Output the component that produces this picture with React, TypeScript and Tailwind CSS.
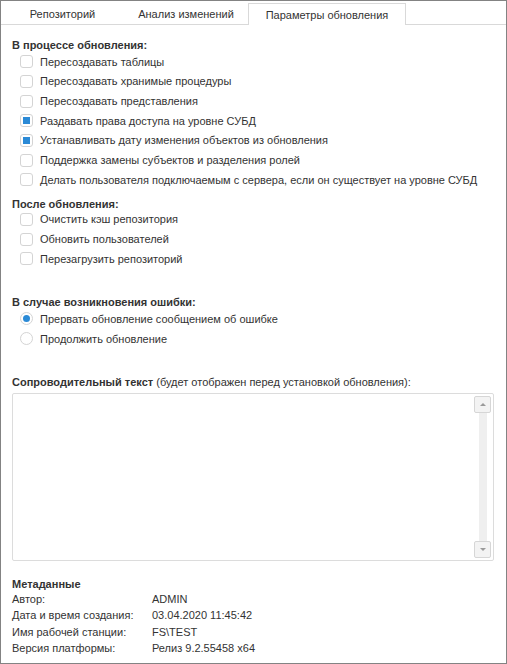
import React from "react";

type Opt = { label: string; checked?: boolean };

const during: Opt[] = [
  { label: "Пересоздавать таблицы" },
  { label: "Пересоздавать хранимые процедуры" },
  { label: "Пересоздавать представления" },
  { label: "Раздавать права доступа на уровне СУБД", checked: true },
  { label: "Устанавливать дату изменения объектов из обновления", checked: true },
  { label: "Поддержка замены субъектов и разделения ролей" },
  { label: "Делать пользователя подключаемым с сервера, если он существует на уровне СУБД" },
];

const after: Opt[] = [
  { label: "Очистить кэш репозитория" },
  { label: "Обновить пользователей" },
  { label: "Перезагрузить репозиторий" },
];

const meta = [
  ["Автор:", "ADMIN"],
  ["Дата и время создания:", "03.04.2020 11:45:42"],
  ["Имя рабочей станции:", "FS\\TEST"],
  ["Версия платформы:", "Релиз 9.2.55458 x64"],
];

function Check({ label, checked }: Opt) {
  return (
    <div className="flex h-[19.67px] items-center whitespace-nowrap">
      <span className="ml-[8px] mr-[7px] flex h-[13px] w-[13px] shrink-0 items-center justify-center rounded-[3px] border border-[#d4d4d4] bg-white">
        {checked && <span className="h-[7px] w-[7px] bg-[#2b8ad6]" />}
      </span>
      <span>{label}</span>
    </div>
  );
}

function Radio({ label, checked }: Opt) {
  return (
    <div className="flex h-[20px] items-center whitespace-nowrap">
      <span className="ml-[8px] mr-[7px] flex h-[13px] w-[13px] shrink-0 items-center justify-center rounded-full border border-[#d4d4d4] bg-white">
        {checked && <span className="h-[7px] w-[7px] rounded-full bg-[#2b8ad6]" />}
      </span>
      <span>{label}</span>
    </div>
  );
}

export default function App() {
  return (
    <div
      className="h-[664px] w-[507px] border border-[#838383] bg-white text-[11px] leading-[14px] text-[#333333]"
      style={{ fontFamily: '"Liberation Sans", Arial, sans-serif' }}
    >
      <div className="flex h-[24px] items-end">
        <div className="flex h-[21px] w-[123px] items-center justify-center border-b border-[#d9d9d9]">Репозиторий</div>
        <div className="flex h-[21px] w-[124px] items-center justify-center border-b border-[#d9d9d9]">Анализ изменений</div>
        <div className="flex h-[22px] w-[158px] items-center justify-center border border-b-0 border-[#d9d9d9] bg-white">
          Параметры обновления
        </div>
        <div className="h-[21px] flex-1 border-b border-[#d9d9d9]" />
      </div>

      <div className="px-[11px] pt-[13px]">
        <div className="font-bold">В процессе обновления:</div>
        <div>
          {during.map((o) => (
            <Check key={o.label} {...o} />
          ))}
        </div>

        <div className="mt-[7px] font-bold">После обновления:</div>
        <div className="mt-[-1px]">
          {after.map((o) => (
            <Check key={o.label} {...o} />
          ))}
        </div>

        <div className="mt-[26px] font-bold">В случае возникновения ошибки:</div>
        <div>
          <Radio label="Прервать обновление сообщением об ошибке" checked />
          <Radio label="Продолжить обновление" />
        </div>

        <div className="mt-[26px] whitespace-nowrap">
          <span className="font-bold">Сопроводительный текст</span> (будет отображен перед установкой обновления):
        </div>
        <div className="mt-[4px] flex h-[168px] w-[482px] justify-end rounded-[2px] border border-[#dcdcdc] p-[2px]">
          <div className="flex w-[17px] flex-col items-center">
            <div className="flex h-[17px] w-[17px] items-center justify-center rounded-[2px] border border-[#d6d6d6] bg-[#f3f3f3]">
              <span className="h-0 w-0 border-x-[3px] border-b-[3px] border-x-transparent border-b-[#9a9a9a]" />
            </div>
            <div className="w-[8px] flex-1 bg-[#efefef]" />
            <div className="flex h-[17px] w-[17px] items-center justify-center rounded-[2px] border border-[#d6d6d6] bg-[#f3f3f3]">
              <span className="h-0 w-0 border-x-[3px] border-t-[3px] border-x-transparent border-t-[#9a9a9a]" />
            </div>
          </div>
        </div>

        <div className="mt-[16px] font-bold">Метаданные</div>
        <div>
          {meta.map(([k, v]) => (
            <div key={k} className="flex h-[16.5px] items-center">
              <span className="w-[140px]">{k}</span>
              <span>{v}</span>
            </div>
          ))}
        </div>
      </div>
    </div>
  );
}
